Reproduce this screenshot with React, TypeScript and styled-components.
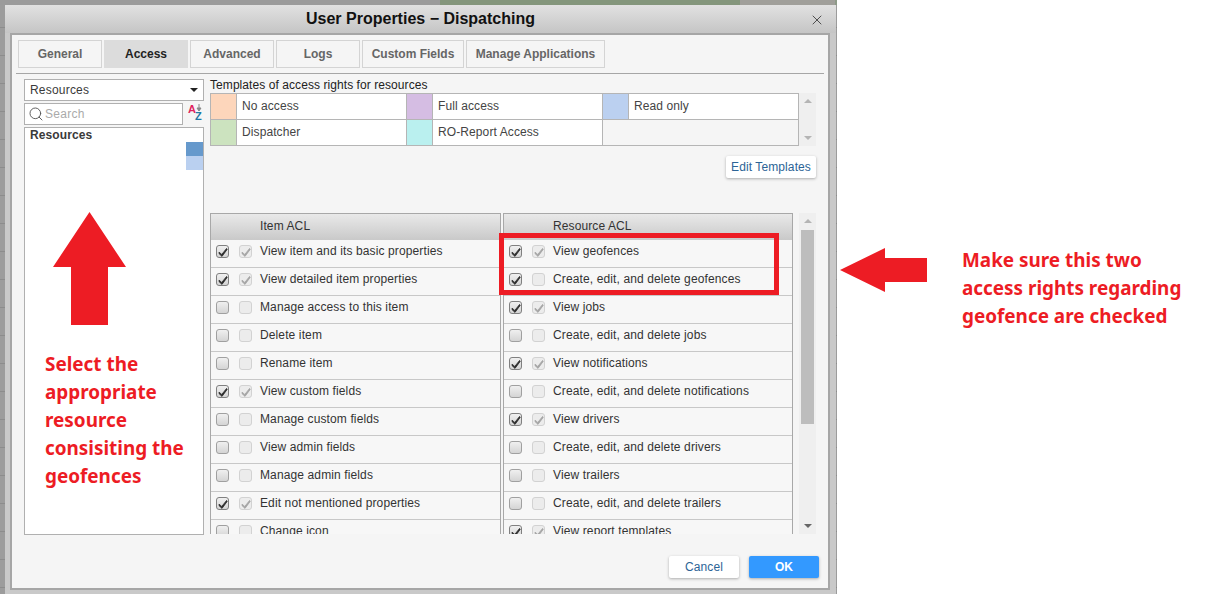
import { createGlobalStyle, styled } from 'styled-components'
import { Search, X } from 'lucide-react'

const Global = createGlobalStyle`
    html, body { margin: 0; padding: 0; background: #fff; }
    body {
        width: 1205px;
        height: 594px;
        overflow: hidden;
        font-family: "Liberation Sans", Arial, sans-serif;
        font-size: 12px;
        color: #3a3a3a;
    }
    * { box-sizing: border-box; }
`

const RED = '#ed1c24'

const Page = styled.div`
    display: flex;
    width: 1205px;
    height: 594px;
`

// the darkened map behind the dialog
const Backdrop = styled.div`
    position: relative;
    flex: 0 0 837px;
    height: 594px;
    padding: 5px 1px 0 5px;
    overflow: hidden;
    background:
        linear-gradient(to right, #9b9b9b 0 440px, #84967c 440px 740px, #a09f9a 740px 835px, #8d9a88 835px) top / 100% 5px no-repeat,
        repeating-linear-gradient(to bottom, #9c9c9c 0 27px, #8c8c8c 27px 28px);
`

const Shell = styled.div`
    display: flex;
    flex-direction: column;
    height: 589px;
    background: #c9c9c9;
`

const TitleBar = styled.div`
    flex: 0 0 28px;
    display: grid;
    grid-template-columns: 1fr auto 1fr;
    align-items: center;
    background: linear-gradient(to bottom, #e1e1e1, #c5c5c5);
`

const Title = styled.div`
    grid-column: 2;
    font-size: 16px;
    font-weight: 700;
    color: #111;
`

const Close = styled.div`
    grid-column: 3;
    justify-self: end;
    display: flex;
    margin: 2px 11px 0 0;
    color: #444;
`

const Body = styled.div`
    flex: 0 0 557px;
    margin: 0 6px 0 5px;
    padding: 5px 4px 0;
    border: 2px solid #a6a6a6;
    background: #f5f5f5;
`

const TabBar = styled.div`
    display: flex;
    gap: 2px;
    padding: 0 0 5px 2px;
    border-bottom: 1px solid #a6a6a6;
`

const Tab = styled.div<{ $active?: boolean; $width: number }>`
    width: ${p => p.$width}px;
    height: 28px;
    display: flex;
    align-items: center;
    justify-content: center;
    border: 1px solid ${p => (p.$active ? '#dcdcdc' : '#d4d4d4')};
    background: ${p => (p.$active ? '#dcdcdc' : '#f5f5f5')};
    color: ${p => (p.$active ? '#222' : '#666')};
    font-weight: 700;
`

const Columns = styled.div`
    display: flex;
    gap: 6px;
    margin: 5px 0 0 8px;
`

const LeftColumn = styled.div`
    flex: 0 0 180px;
    display: flex;
    flex-direction: column;
    gap: 2px;
`

const Select = styled.div`
    height: 22px;
    display: flex;
    align-items: center;
    justify-content: space-between;
    padding: 0 5px 0 5px;
    border: 1px solid #b0b0b0;
    background: #fff;
    letter-spacing: 0.2px;
`

const Caret = styled.span`
    width: 0;
    height: 0;
    border-left: 4px solid transparent;
    border-right: 4px solid transparent;
    border-top: 4px solid #222;
`

const SearchRow = styled.div`
    height: 22px;
    display: flex;
    align-items: center;
    justify-content: space-between;
`

const SearchBox = styled.div`
    width: 159px;
    height: 22px;
    display: flex;
    align-items: center;
    gap: 1px;
    padding-left: 3px;
    border: 1px solid #b0b0b0;
    background: #fff;
    color: #aaa;
    letter-spacing: 0.3px;
    svg { color: #555; }
`

const ResourceList = styled.div`
    height: 408px;
    display: flex;
    flex-direction: column;
    border: 1px solid #b0b0b0;
    background: #fff;
`

const ListTitle = styled.div`
    height: 14px;
    padding-left: 5px;
    font-weight: 700;
    line-height: 14px;
    letter-spacing: 0.1px;
`

const Swatches = styled.div`
    align-self: flex-end;
    width: 17px;
`

const Swatch = styled.div<{ $color: string }>`
    height: 14px;
    background: ${p => p.$color};
`

const RightColumn = styled.div`
    flex: 0 0 606px;
    display: flex;
    flex-direction: column;
`

const TemplatesLabel = styled.div`
    height: 14px;
    line-height: 12px;
    color: #222;
    letter-spacing: 0.07px;
`

const TemplatesRow = styled.div`
    display: flex;
`

const TemplateGrid = styled.div`
    flex: 0 0 589px;
    display: grid;
    grid-template-columns: repeat(3, 1fr);
    grid-auto-rows: 26px;
    border-top: 1px solid #b5b5b5;
    border-left: 1px solid #b5b5b5;
`

const Template = styled.div<{ $empty?: boolean }>`
    display: flex;
    border-right: 1px solid #b5b5b5;
    border-bottom: 1px solid #b5b5b5;
    background: ${p => (p.$empty ? 'transparent' : '#fff')};
`

const TemplateColor = styled.div<{ $color: string }>`
    flex: 0 0 26px;
    border-right: 1px solid #b5b5b5;
    background: ${p => p.$color};
`

const TemplateName = styled.div`
    display: flex;
    align-items: center;
    padding: 0 0 2px 5px;
    color: #444;
    letter-spacing: 0.1px;
`

const ScrollTrack = styled.div<{ $height: number }>`
    flex: 0 0 17px;
    height: ${p => p.$height}px;
    display: flex;
    flex-direction: column;
    align-items: center;
    justify-content: space-between;
    padding: 6px 0;
    background: #efefef;
`

const Arrow = styled.span<{ $down?: boolean; $dark?: boolean }>`
    width: 0;
    height: 0;
    border-left: 4px solid transparent;
    border-right: 4px solid transparent;
    ${p => (p.$down ? 'border-top' : 'border-bottom')}: 4px solid ${p => (p.$dark ? '#666' : '#b4b4b4')};
`

const Thumb = styled.div`
    flex: 0 0 194px;
    width: 13px;
    margin: 7px 0 auto;
    background: #bdbdbd;
`

const EditBar = styled.div`
    display: flex;
    justify-content: flex-end;
    margin: 10px 0 35px;
`

const Button = styled.div<{ $primary?: boolean; $width: number }>`
    width: ${p => p.$width}px;
    height: 22px;
    display: flex;
    align-items: center;
    justify-content: center;
    border-radius: 2px;
    background: ${p => (p.$primary ? '#3399ff' : '#fff')};
    color: ${p => (p.$primary ? '#fff' : '#2c6496')};
    font-weight: ${p => (p.$primary ? 700 : 400)};
    letter-spacing: 0.1px;
    box-shadow: 0 1px 3px rgba(0, 0, 0, 0.3);
`

const AclRow = styled.div`
    display: flex;
    height: 321px;
`

const AclColumn = styled.div<{ $width: number; $after: number }>`
    flex: 0 0 ${p => p.$width}px;
    height: 321px;
    margin-right: ${p => p.$after}px;
    overflow: hidden;
    border: 1px solid #a8a8a8;
    border-bottom: none;
`

const AclHead = styled.div`
    height: 26px;
    padding: 0 0 2px 49px;
    display: flex;
    align-items: center;
    background: linear-gradient(to bottom, #e9e9e9, #c9c9c9);
    color: #333;
    letter-spacing: 0.1px;
`

const Rule = styled.div`
    display: flex;
    height: 28px;
    padding: 5px 0 0 5px;
    border-bottom: 1px solid #c8c8c8;
    background: #f7f7f7;
`

const Box = styled.span<{ $on: boolean; $soft?: boolean }>`
    flex: 0 0 13px;
    height: 13px;
    margin-right: 10px;
    display: flex;
    align-items: center;
    justify-content: center;
    border-radius: 3px;
    border: 1px solid ${p => (p.$soft ? '#d2d2d2' : p.$on ? '#808080' : '#a0a0a0')};
    background: ${p => (p.$soft ? '#ececec' : 'linear-gradient(to bottom, #f0f0f0, #d4d4d4)')};
    color: ${p => (p.$soft ? '#a4a4a4' : '#2c2c2c')};
`

const RuleName = styled.span`
    margin: -1px 0 0 -2px;
    line-height: 14px;
    color: #333;
    letter-spacing: 0.12px;
    white-space: nowrap;
`

const Footer = styled.div`
    display: flex;
    justify-content: flex-end;
    gap: 10px;
    margin-top: 21px;
    padding-right: 5px;
`

// red markup drawn on top of the screenshot
const Highlight = styled.div`
    position: absolute;
    left: 499px;
    top: 233px;
    width: 280px;
    height: 62px;
    border: 5px solid ${RED};
`

const UpArrow = styled.svg`
    position: absolute;
    left: 53px;
    top: 212px;
`

const Note = styled.div`
    font-family: "Noto Sans", "Open Sans", sans-serif;
    font-size: 18.9px;
    font-weight: 700;
    line-height: 28px;
    color: ${RED};
    white-space: nowrap;
`

const LeftNote = styled(Note)`
    position: absolute;
    left: 45px;
    top: 350px;
`

const Aside = styled.div`
    flex: 1;
    display: flex;
    align-items: flex-start;
    gap: 35px;
    padding: 246px 0 0 3px;
`

const SideArrow = styled.svg`
    margin-top: 2px;
    flex: none;
`

function Check() {
    return (
        <svg width='10' height='10' viewBox='0 0 10 10'>
            <path d='M1 5.2 L3.8 7.4 L8.6 1.4 L9.2 2.4 L4 9.4 L1 6.6 Z' fill='currentColor' stroke='currentColor' strokeWidth='0.8' strokeLinejoin='round' />
        </svg>
    )
}

function SortIcon() {
    return (
        <svg width='17' height='20' viewBox='0 0 17 20'>
            <text x='1' y='9' fontFamily='Liberation Sans' fontWeight='700' fontSize='11' fill='#e0245e'>A</text>
            <text x='8' y='16' fontFamily='Liberation Sans' fontWeight='700' fontSize='11' fill='#1f78a4'>Z</text>
            <path d='M12 0 V5 M10 4 L12 7 L14 4 Z' stroke='#888' strokeWidth='1' fill='#888' />
        </svg>
    )
}

const tabs = [
    { name: 'General', width: 84 },
    { name: 'Access', width: 84, active: true },
    { name: 'Advanced', width: 84 },
    { name: 'Logs', width: 84 },
    { name: 'Custom Fields', width: 102 },
    { name: 'Manage Applications', width: 139 },
]

const templates = [
    { name: 'No access', color: '#fdd6bb' },
    { name: 'Full access', color: '#d5bde3' },
    { name: 'Read only', color: '#bbd0f0' },
    { name: 'Dispatcher', color: '#cce3bf' },
    { name: 'RO-Report Access', color: '#baf0ef' },
]

type AclItem = [string, boolean, boolean]

const itemAcl: AclItem[] = [
    ['View item and its basic properties', true, true],
    ['View detailed item properties', true, true],
    ['Manage access to this item', false, false],
    ['Delete item', false, false],
    ['Rename item', false, false],
    ['View custom fields', true, true],
    ['Manage custom fields', false, false],
    ['View admin fields', false, false],
    ['Manage admin fields', false, false],
    ['Edit not mentioned properties', true, true],
    ['Change icon', false, false],
]

const resourceAcl: AclItem[] = [
    ['View geofences', true, true],
    ['Create, edit, and delete geofences', true, false],
    ['View jobs', true, true],
    ['Create, edit, and delete jobs', false, false],
    ['View notifications', true, true],
    ['Create, edit, and delete notifications', false, false],
    ['View drivers', true, true],
    ['Create, edit, and delete drivers', false, false],
    ['View trailers', false, false],
    ['Create, edit, and delete trailers', false, false],
    ['View report templates', true, true],
]

function Acl({ title, rows, width, after }: { title: string; rows: AclItem[]; width: number; after: number }) {
    return (
        <AclColumn $width={width} $after={after}>
            <AclHead>{title}</AclHead>
            {rows.map(([name, own, inherited]) => (
                <Rule key={name}>
                    <Box $on={own}>{own && <Check />}</Box>
                    <Box $on={inherited} $soft>{inherited && <Check />}</Box>
                    <RuleName>{name}</RuleName>
                </Rule>
            ))}
        </AclColumn>
    )
}

export default function App() {
    return (
        <Page>
            <Global />
            <Backdrop>
                <Shell>
                    <TitleBar>
                        <Title>User Properties − Dispatching</Title>
                        <Close><X size={16} strokeWidth={1.4} /></Close>
                    </TitleBar>
                    <Body>
                        <TabBar>
                            {tabs.map(t => (
                                <Tab key={t.name} $width={t.width} $active={t.active}>{t.name}</Tab>
                            ))}
                        </TabBar>
                        <Columns>
                            <LeftColumn>
                                <Select>Resources<Caret /></Select>
                                <SearchRow>
                                    <SearchBox><Search size={16} strokeWidth={1.4} />Search</SearchBox>
                                    <SortIcon />
                                </SearchRow>
                                <ResourceList>
                                    <ListTitle>Resources</ListTitle>
                                    <Swatches>
                                        <Swatch $color='#6699cc' />
                                        <Swatch $color='#bad0f0' />
                                    </Swatches>
                                </ResourceList>
                            </LeftColumn>
                            <RightColumn>
                                <TemplatesLabel>Templates of access rights for resources</TemplatesLabel>
                                <TemplatesRow>
                                    <TemplateGrid>
                                        {templates.map(t => (
                                            <Template key={t.name}>
                                                <TemplateColor $color={t.color} />
                                                <TemplateName>{t.name}</TemplateName>
                                            </Template>
                                        ))}
                                        <Template $empty />
                                    </TemplateGrid>
                                    <ScrollTrack $height={53}>
                                        <Arrow />
                                        <Arrow $down />
                                    </ScrollTrack>
                                </TemplatesRow>
                                <EditBar>
                                    <Button $width={90}>Edit Templates</Button>
                                </EditBar>
                                <AclRow>
                                    <Acl title='Item ACL' rows={itemAcl} width={291} after={2} />
                                    <Acl title='Resource ACL' rows={resourceAcl} width={290} after={6} />
                                    <ScrollTrack $height={321}>
                                        <Arrow />
                                        <Thumb />
                                        <Arrow $down $dark />
                                    </ScrollTrack>
                                </AclRow>
                            </RightColumn>
                        </Columns>
                        <Footer>
                            <Button $width={70}>Cancel</Button>
                            <Button $width={70} $primary>OK</Button>
                        </Footer>
                    </Body>
                </Shell>

                <Highlight />
                <UpArrow width='73' height='113' viewBox='0 0 73 113'>
                    <path d='M36.5 0 L73 55 L55 55 L55 113 L18 113 L18 55 L0 55 Z' fill={RED} />
                </UpArrow>
                <LeftNote>
                    Select the<br />
                    appropriate<br />
                    resource<br />
                    consisiting the<br />
                    geofences
                </LeftNote>
            </Backdrop>
            <Aside>
                <SideArrow width='87' height='44' viewBox='0 0 87 44'>
                    <path d='M0 22 L45 0 L45 10 L87 10 L87 34 L45 34 L45 44 Z' fill={RED} />
                </SideArrow>
                <Note>
                    Make sure this two<br />
                    access rights regarding<br />
                    geofence are checked
                </Note>
            </Aside>
        </Page>
    )
}
